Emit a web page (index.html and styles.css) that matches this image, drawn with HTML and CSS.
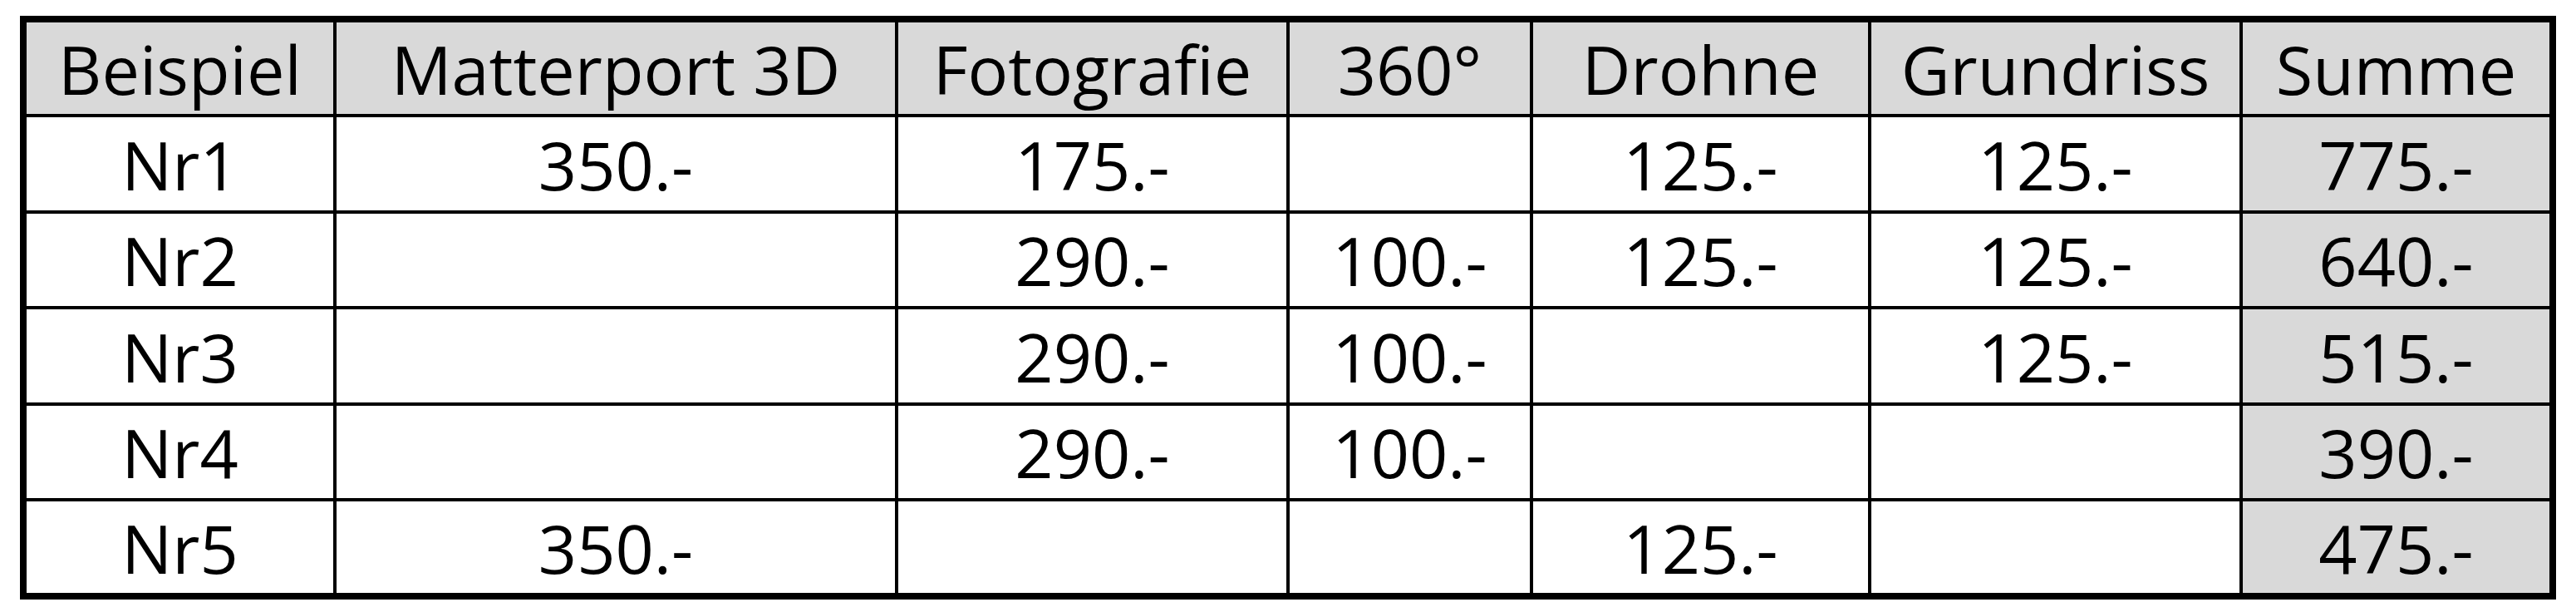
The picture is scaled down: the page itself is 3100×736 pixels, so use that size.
FILE: index.html
```html
<!DOCTYPE html>
<html lang="de">
<head>
<meta charset="utf-8">
<title>Beispiele</title>
<link rel="stylesheet" href="styles.css">
</head>
<body>
<div class="sheet" role="table">
  <div class="cell head" role="columnheader">Beispiel</div>
  <div class="cell head" role="columnheader">Matterport 3D</div>
  <div class="cell head" role="columnheader">Fotografie</div>
  <div class="cell head" role="columnheader">360°</div>
  <div class="cell head" role="columnheader">Drohne</div>
  <div class="cell head" role="columnheader">Grundriss</div>
  <div class="cell head" role="columnheader">Summe</div>

  <div class="cell">Nr1</div>
  <div class="cell">350.-</div>
  <div class="cell">175.-</div>
  <div class="cell"></div>
  <div class="cell">125.-</div>
  <div class="cell">125.-</div>
  <div class="cell sum">775.-</div>

  <div class="cell">Nr2</div>
  <div class="cell"></div>
  <div class="cell">290.-</div>
  <div class="cell">100.-</div>
  <div class="cell">125.-</div>
  <div class="cell">125.-</div>
  <div class="cell sum">640.-</div>

  <div class="cell">Nr3</div>
  <div class="cell"></div>
  <div class="cell">290.-</div>
  <div class="cell">100.-</div>
  <div class="cell"></div>
  <div class="cell">125.-</div>
  <div class="cell sum">515.-</div>

  <div class="cell">Nr4</div>
  <div class="cell"></div>
  <div class="cell">290.-</div>
  <div class="cell">100.-</div>
  <div class="cell"></div>
  <div class="cell"></div>
  <div class="cell sum">390.-</div>

  <div class="cell">Nr5</div>
  <div class="cell">350.-</div>
  <div class="cell"></div>
  <div class="cell"></div>
  <div class="cell">125.-</div>
  <div class="cell"></div>
  <div class="cell sum">475.-</div>
</div>
</body>
</html>
```
FILE: styles.css
```css
html, body {
  margin: 0;
  padding: 0;
  background: #ffffff;
}

body {
  padding: 19px 0 0 24px;
}

.sheet {
  display: grid;
  grid-template-columns: 369px 672px 467px 289px 403px 443px 369px;
  grid-template-rows: 110px 112px 111px 112px 111px 110px;
  gap: 4px;
  width: max-content;
  border: 8px solid #000000;
  background: #000000;
  font-family: "Open Sans", "Noto Sans", sans-serif;
  font-size: 81px;
  color: #000000;
}

.cell {
  display: flex;
  align-items: center;
  justify-content: center;
  background: #ffffff;
  white-space: nowrap;
  line-height: normal;
}

.head,
.sum {
  background: #d9d9d9;
}
```
